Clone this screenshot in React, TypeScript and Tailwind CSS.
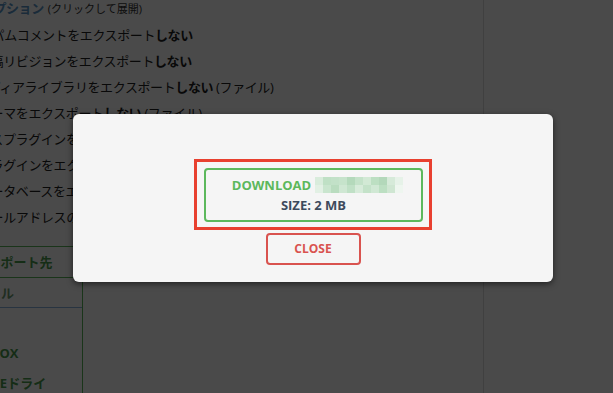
import React from "react";

const rows1 = ["#d9ecdc", "#bfe0c5", "#c2e1c8", "#c6e3cb", "#b4d9bb", "#c4e2c9", "#d2e9d5", "#bcdfc2", "#b3d8ba", "#d6ead9", "#e6f2e8"];
const rows2 = ["#e2f0e4", "#c9e5ce", "#b9dcbf", "#cfe7d3", "#c0e0c6", "#d7ebda", "#c4e2c9", "#d0e8d4", "#bcdfc2", "#cfe6d2", "#eef6ef"];

function Opt({ ml, pre, bold, post }: { ml: string; pre: string; bold?: string; post?: string }) {
  return (
    <div className={`h-[26px] leading-[26px] whitespace-nowrap text-[13px] tracking-[-0.4px] text-[#222222] ${ml}`}>
      {pre}
      {bold && <span className="font-bold">{bold}</span>}
      {post && <span>{post}</span>}
    </div>
  );
}

export default function App() {
  return (
    <div className="relative w-[613px] h-[393px] overflow-hidden bg-white font-['Open_Sans','Noto_Sans_CJK_JP',sans-serif]">
      <div className="flex h-full">
        <div className="w-[483px] flex flex-col">
          <div className="-mt-[5px] h-[27px] leading-[26px] whitespace-nowrap -ml-[57px] flex items-baseline">
            <span className="text-[13px] font-bold tracking-[-0.4px] text-[#5a95c8]">高度なオプション</span>
            <span className="ml-[4px] text-[11px] text-[#333333]">(クリックして展開)</span>
          </div>
          <Opt ml="-ml-[21px]" pre="スパムコメントをエクスポート" bold="しない" />
          <Opt ml="-ml-[22px]" pre="投稿リビジョンをエクスポート" bold="しない" />
          <Opt ml="-ml-[25px]" pre="メディアライブラリをエクスポート" bold="しない" post=" (ファイル)" />
          <Opt ml="-ml-[22px]" pre="テーマをエクスポート" bold="しない" post=" (ファイル)" />
          <Opt ml="-ml-[72px]" pre="マストユースプラグインをエクスポート" bold="しない" post=" (ファイル)" />
          <Opt ml="-ml-[22px]" pre="プラグインをエクスポート" bold="しない" post=" (ファイル)" />
          <Opt ml="-ml-[22px]" pre="データベースをエクスポート" bold="しない" post=" (SQL)" />
          <Opt ml="-ml-[22px]" pre="メールアドレスの置換を" bold="しない" />
          <div className="mt-[16px] w-[83px] flex-1 border-t border-r border-[#5cb85c] text-[13px] font-bold text-[#4a9a4c] whitespace-nowrap">
            <div className="h-[31px] leading-[30px] border-b border-[#5cb85c] -ml-[38px]">エクスポート先</div>
            <div className="h-[30px] leading-[30px] border-b border-[#8ab4e0] -ml-[38px] text-[#6f9c72]">ファイル</div>
            <div className="h-[30px] leading-[30px] -ml-[40px]">FTP</div>
            <div className="h-[30px] leading-[30px] -ml-[46px]">DROPBOX</div>
            <div className="h-[30px] leading-[30px] -ml-[47px]">GOOGLEドライ<br />ブ</div>
          </div>
        </div>
        <div className="flex-1 border-l border-[#dddddd]"></div>
      </div>

      <div className="absolute inset-0 bg-[rgba(0,0,0,0.71)] pl-[73px] pt-[114px]">
        <div className="w-[480px] h-[168px] rounded-[6px] bg-[#f5f5f5] shadow-[0_2px_6px_rgba(0,0,0,0.55)] flex flex-col items-center pt-[45px]">
          <div className="w-[238px] h-[71px] border-[3px] border-[#e8402f] pt-[6px] pb-[5px] pl-[7px] pr-[6px]">
            <div className="h-full border-2 border-[#5cb85c] rounded-[4px] flex flex-col items-center justify-center font-bold text-[13px]">
              <div className="h-[20px] leading-[20px] flex items-center gap-[4px] ml-[8px]">
                <span className="text-[#5cb85c]">DOWNLOAD</span>
                <div className="flex flex-col">
                  <div className="flex">
                    {rows1.map((c, i) => (
                      <div key={i} className="w-[8px] h-[8px]" style={{ backgroundColor: c }} />
                    ))}
                  </div>
                  <div className="flex">
                    {rows2.map((c, i) => (
                      <div key={i} className="w-[8px] h-[8px]" style={{ backgroundColor: c }} />
                    ))}
                  </div>
                </div>
              </div>
              <div className="h-[20px] leading-[20px] text-[#3d4a5c]">SIZE: 2 MB</div>
            </div>
          </div>
          <button className="mt-[3px] w-[95px] h-[32px] border-2 border-[#d9534f] rounded-[4px] text-[12px] font-bold text-[#d9534f] flex items-center justify-center">
            CLOSE
          </button>
        </div>
      </div>
    </div>
  );
}
